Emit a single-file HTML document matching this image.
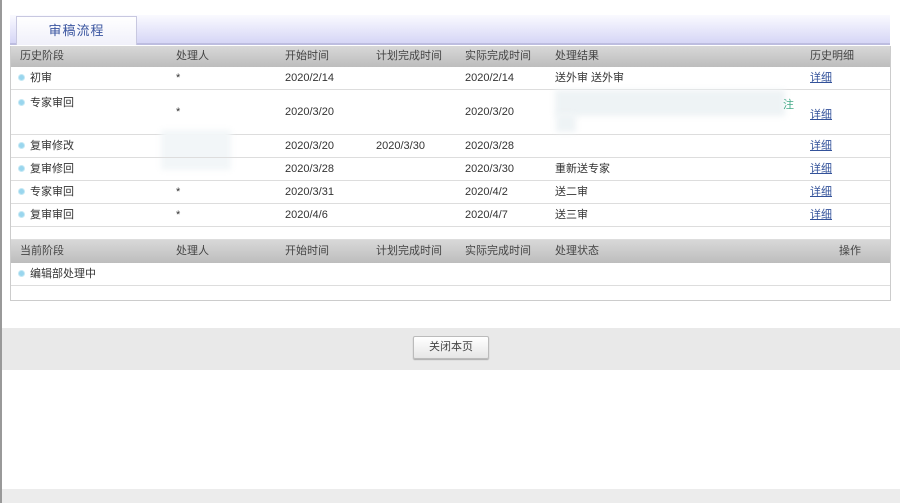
<!DOCTYPE html>
<html><head><meta charset="utf-8"><style>
*{margin:0;padding:0;box-sizing:border-box}
body{width:900px;height:503px;background:#fff;position:relative;overflow:hidden;font-family:"Liberation Sans","Noto Sans CJK SC",sans-serif;font-size:11px;color:#333}
.lb{position:absolute;left:0;top:0;width:2px;height:503px;background:#999}
.band{position:absolute;left:10px;top:15px;width:880px;height:30px;background:linear-gradient(#fafaff,#d6d6f6);border-bottom:2px solid #bdbde0}
.tab{position:absolute;left:16px;top:16px;width:121px;height:29px;background:linear-gradient(#fff,#f0f0fa);border:1px solid #c8c8e0;border-bottom:none;color:#3a55a0;font-size:13px;text-align:center;line-height:27px;letter-spacing:1px}
.box{position:absolute;left:10px;top:46px;width:881px;height:255px;border:1px solid #ccc;border-top:none}
.r{position:absolute;left:0;width:879px;border-bottom:1px solid #ddd}
.h{background:linear-gradient(#d8d8d8,#bdbdbd);color:#444;border-bottom:none}
.c{position:absolute;white-space:nowrap}
.d{display:inline-block;width:7px;height:7px;border-radius:50%;background:#9ad6ee;border:1px solid #c4e8f4;margin-right:5px;vertical-align:0}
a{color:#33529a;text-decoration:underline}
.gray{position:absolute;left:2px;top:328px;width:898px;height:42px;background:#e9e9e9}
.btn{position:absolute;left:413px;top:336px;width:76px;height:23px;border:1px solid #bbb;border-radius:2px;background:linear-gradient(#fff,#e6e6e6);text-align:center;line-height:21px;font-size:11px;color:#444;box-shadow:0 1px 1px #aaa}
.bot{position:absolute;left:2px;top:489px;width:898px;height:14px;background:#ececec}
.blur{position:absolute;background:#eef3f5;filter:blur(3px)}
</style></head><body>
<div class="lb"></div>
<div class="band"></div>
<div class="tab">审稿流程</div>
<div class="box">
<div class="r h" style="top:0;height:21px;line-height:21px">
<span class="c" style="left:9px">历史阶段</span><span class="c" style="left:165px">处理人</span><span class="c" style="left:274px">开始时间</span><span class="c" style="left:365px">计划完成时间</span><span class="c" style="left:454px">实际完成时间</span><span class="c" style="left:544px">处理结果</span><span class="c" style="left:799px">历史明细</span></div>
<div class="r" style="top:21px;height:23px;line-height:22px"><span class="c" style="left:7px"><i class="d"></i>初审</span><span class="c" style="left:165px">*</span><span class="c" style="left:274px">2020/2/14</span><span class="c" style="left:454px">2020/2/14</span><span class="c" style="left:544px">送外审 送外审</span><a class="c" style="left:799px">详细</a></div>
<div class="r" style="top:44px;height:45px"><span class="c" style="left:7px;top:4px"><i class="d"></i>专家审回</span><span class="c" style="left:165px;top:16px">*</span><span class="c" style="left:274px;top:16px">2020/3/20</span><span class="c" style="left:454px;top:16px">2020/3/20</span><div class="blur" style="left:544px;top:0;width:230px;height:26px"></div><div class="blur" style="left:545px;top:24px;width:20px;height:18px"></div><span class="c" style="left:772px;top:6px;color:#4a8">注</span><a class="c" style="left:799px;top:16px">详细</a></div>
<div class="blur" style="left:150px;top:84px;width:70px;height:40px;background:#f2f6f8"></div>
<div class="r" style="top:89px;height:23px;line-height:22px"><span class="c" style="left:7px"><i class="d"></i>复审修改</span><span class="c" style="left:274px">2020/3/20</span><span class="c" style="left:365px">2020/3/30</span><span class="c" style="left:454px">2020/3/28</span><a class="c" style="left:799px">详细</a></div>
<div class="r" style="top:112px;height:23px;line-height:22px"><span class="c" style="left:7px"><i class="d"></i>复审修回</span><span class="c" style="left:274px">2020/3/28</span><span class="c" style="left:454px">2020/3/30</span><span class="c" style="left:544px">重新送专家</span><a class="c" style="left:799px">详细</a></div>
<div class="r" style="top:135px;height:23px;line-height:22px"><span class="c" style="left:7px"><i class="d"></i>专家审回</span><span class="c" style="left:165px">*</span><span class="c" style="left:274px">2020/3/31</span><span class="c" style="left:454px">2020/4/2</span><span class="c" style="left:544px">送二审</span><a class="c" style="left:799px">详细</a></div>
<div class="r" style="top:158px;height:23px;line-height:22px"><span class="c" style="left:7px"><i class="d"></i>复审审回</span><span class="c" style="left:165px">*</span><span class="c" style="left:274px">2020/4/6</span><span class="c" style="left:454px">2020/4/7</span><span class="c" style="left:544px">送三审</span><a class="c" style="left:799px">详细</a></div>
<div class="r" style="top:181px;height:13px"></div>
<div class="r h" style="top:194px;height:23px;line-height:22px">
<span class="c" style="left:9px">当前阶段</span><span class="c" style="left:165px">处理人</span><span class="c" style="left:274px">开始时间</span><span class="c" style="left:365px">计划完成时间</span><span class="c" style="left:454px">实际完成时间</span><span class="c" style="left:544px">处理状态</span><span class="c" style="left:828px">操作</span></div>
<div class="r" style="top:217px;height:23px;line-height:22px"><span class="c" style="left:7px"><i class="d"></i>编辑部处理中</span></div>
</div>
<div class="gray"></div>
<div class="btn">关闭本页</div>
<div class="bot"></div>
</body></html>
